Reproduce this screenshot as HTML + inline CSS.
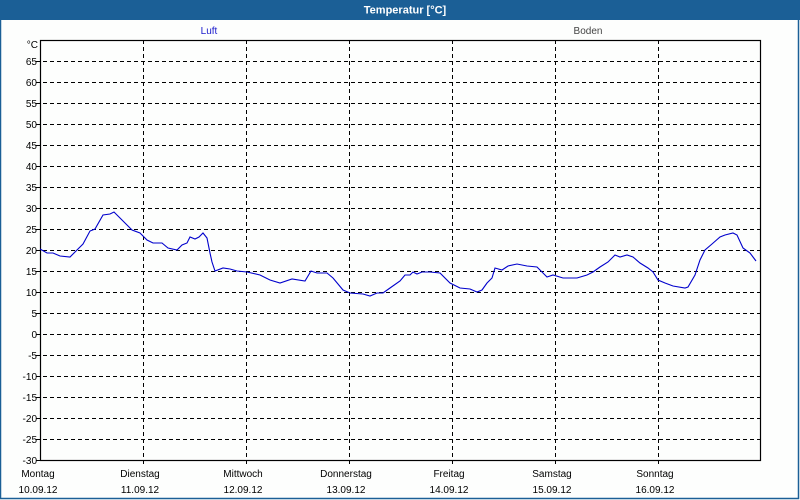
<!DOCTYPE html>
<html><head><meta charset="utf-8"><style>
html,body{margin:0;padding:0;background:#fdfefd;}
svg{display:block;font-family:"Liberation Sans","DejaVu Sans",sans-serif;}
</style></head><body>
<svg width="800" height="500" viewBox="0 0 800 500" xmlns="http://www.w3.org/2000/svg">
<rect x="0" y="0" width="800" height="500" fill="#fdfefd"/>
<rect x="0.5" y="0.5" width="798" height="498" fill="none" stroke="#1b5f96" stroke-width="1.5"/>
<rect x="0" y="0" width="800" height="20" fill="#1b5f96"/>
<text x="405" y="13.5" text-anchor="middle" fill="#fff" font-weight="bold" font-size="11">Temperatur [°C]</text>
<text x="209" y="34" text-anchor="middle" fill="#1a1acc" font-size="10">Luft</text>
<text x="588" y="34" text-anchor="middle" fill="#444" font-size="10">Boden</text>
<g stroke="#000" stroke-width="1" stroke-dasharray="4,3" fill="none">
<path d="M36 61.5H760M36 82.5H760M36 103.5H760M36 124.5H760M36 145.5H760M36 166.5H760M36 187.5H760M36 208.5H760M36 229.5H760M36 250.5H760M36 271.5H760M36 292.5H760M36 313.5H760M36 334.5H760M36 355.5H760M36 376.5H760M36 397.5H760M36 418.5H760M36 439.5H760"/>
<path d="M143.5 40V465M246.5 40V465M349.5 40V465M452.5 40V465M555.5 40V465M658.5 40V465"/>
</g>
<rect x="40.5" y="40.5" width="720" height="420" fill="none" stroke="#000" stroke-width="1.2"/>
<path d="M36 460.5H40" stroke="#000"/>
<g font-size="10" fill="#000" text-anchor="end">
<text x="38" y="48">°C</text>
<text x="37" y="65">65</text><text x="37" y="86">60</text><text x="37" y="107">55</text><text x="37" y="128">50</text>
<text x="37" y="149">45</text><text x="37" y="170">40</text><text x="37" y="191">35</text><text x="37" y="212">30</text>
<text x="37" y="233">25</text><text x="37" y="254">20</text><text x="37" y="275">15</text><text x="37" y="296">10</text>
<text x="37" y="317">5</text><text x="37" y="338">0</text><text x="37" y="359">-5</text><text x="37" y="380">-10</text>
<text x="37" y="401">-15</text><text x="37" y="422">-20</text><text x="37" y="443">-25</text><text x="37" y="464">-30</text>
</g>
<g font-size="10" fill="#000" text-anchor="middle">
<text x="38" y="477">Montag</text><text x="38" y="493">10.09.12</text>
<text x="140" y="477">Dienstag</text><text x="140" y="493">11.09.12</text>
<text x="243" y="477">Mittwoch</text><text x="243" y="493">12.09.12</text>
<text x="346" y="477">Donnerstag</text><text x="346" y="493">13.09.12</text>
<text x="449" y="477">Freitag</text><text x="449" y="493">14.09.12</text>
<text x="552" y="477">Samstag</text><text x="552" y="493">15.09.12</text>
<text x="655" y="477">Sonntag</text><text x="655" y="493">16.09.12</text>
</g>
<polyline fill="none" stroke="#0000cc" stroke-width="1.1" points="40,249 47,253 53,253 60,256 70,257 80,247 83,244 90,231 95,229 103,215 110,214 114,212 122,220 132,230 140,233 147,240 153,243 162,243 168,248 177,250 182,245 187,243 190,237 195,239 199,237 203,233 207,238 210,253 212,262 215,271 223,268 230,269 237,271 247,272 260,275 270,280 280,283 292,279 305,281 311,271 317,273 327,273 333,278 343,290 350,293 363,294 370,296 377,293 383,293 390,288 400,281 405,275 410,275 413,272 417,274 422,272 430,272 440,273 450,283 460,288 470,289 477,292 482,290 487,283 492,278 495,268 502,270 508,266 517,264 527,266 537,267 542,272 547,277 553,275 563,278 577,278 587,275 593,272 600,267 608,262 615,255 620,257 627,255 633,257 640,263 648,268 653,272 658,280 665,283 673,286 685,288 688,287 695,275 700,260 705,250 712,244 720,237 725,235 733,233 737,235 743,248 750,253 756,261"/>
</svg>
</body></html>
